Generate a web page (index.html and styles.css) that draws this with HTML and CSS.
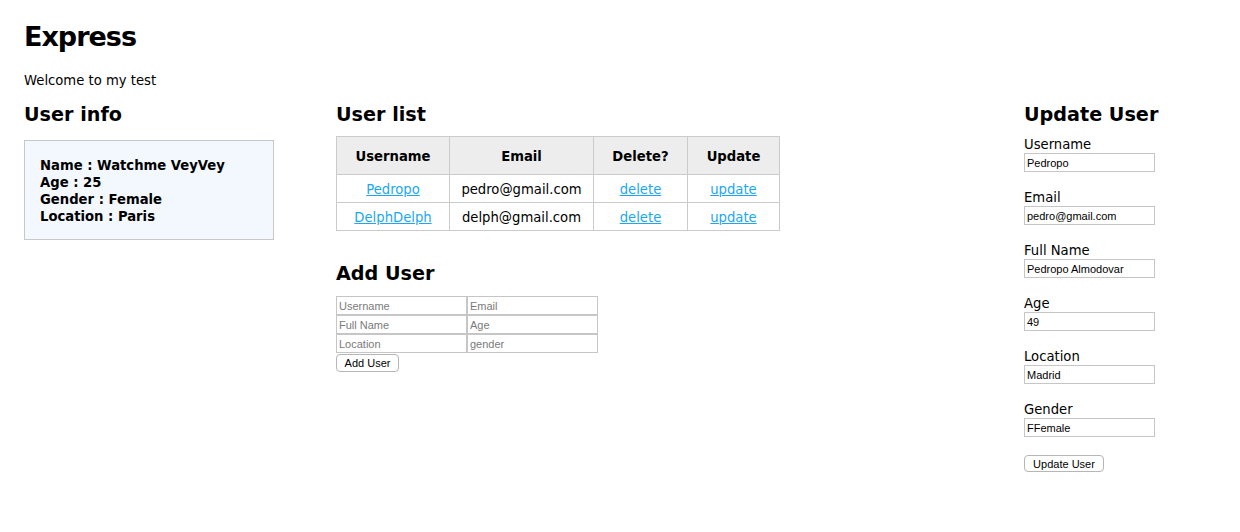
FILE: index.html
```html
<!DOCTYPE html>
<html>
<head>
<meta charset="utf-8">
<title>Express</title>
<link rel="stylesheet" href="styles.css">
</head>
<body>
<h1 class="title">Express</h1>
<p class="welcome">Welcome to my test</p>
<div class="columns">
  <section class="col col-info">
    <h2 class="heading">User info</h2>
    <div class="info-box">
      <div>Name : Watchme VeyVey</div>
      <div>Age : 25</div>
      <div>Gender : Female</div>
      <div>Location : Paris</div>
    </div>
  </section>
  <section class="col col-list">
    <h2 class="heading">User list</h2>
    <table class="users">
      <colgroup>
        <col class="c1"><col class="c2"><col class="c3"><col class="c4">
      </colgroup>
      <thead>
        <tr><th>Username</th><th>Email</th><th>Delete?</th><th>Update</th></tr>
      </thead>
      <tbody>
        <tr><td><a href="#">Pedropo</a></td><td>pedro@gmail.com</td><td><a href="#">delete</a></td><td><a href="#">update</a></td></tr>
        <tr><td><a href="#">DelphDelph</a></td><td>delph@gmail.com</td><td><a href="#">delete</a></td><td><a href="#">update</a></td></tr>
      </tbody>
    </table>
    <h2 class="heading add-heading">Add User</h2>
    <div class="add-grid">
      <input class="field" type="text" placeholder="Username">
      <input class="field" type="text" placeholder="Email">
      <input class="field" type="text" placeholder="Full Name">
      <input class="field" type="text" placeholder="Age">
      <input class="field" type="text" placeholder="Location">
      <input class="field" type="text" placeholder="gender">
    </div>
    <button class="btn btn-add" type="button">Add User</button>
  </section>
  <section class="col col-update">
    <h2 class="heading">Update User</h2>
    <div class="group"><label class="lbl">Username</label><input class="field" type="text" value="Pedropo"></div>
    <div class="group"><label class="lbl">Email</label><input class="field" type="text" value="pedro@gmail.com"></div>
    <div class="group"><label class="lbl">Full Name</label><input class="field" type="text" value="Pedropo Almodovar"></div>
    <div class="group"><label class="lbl">Age</label><input class="field" type="text" value="49"></div>
    <div class="group"><label class="lbl">Location</label><input class="field" type="text" value="Madrid"></div>
    <div class="group"><label class="lbl">Gender</label><input class="field" type="text" value="FFemale"></div>
    <button class="btn btn-update" type="button">Update User</button>
  </section>
</div>
</body>
</html>
```
FILE: styles.css
```css
html, body {
  margin: 0;
  background: #ffffff;
}
body {
  padding: 20px 24px 0 24px;
  font-family: "DejaVu Sans", "Lucida Grande", Verdana, sans-serif;
  font-size: 13.2px;
  line-height: 17px;
  color: #000;
}
.title {
  margin: 0;
  font-size: 27px;
  letter-spacing: -1px;
  line-height: 34px;
  font-weight: bold;
}
.welcome {
  margin: 18px 0 0 0;
}
.columns {
  display: flex;
  align-items: flex-start;
  margin-top: 14px;
}
.col-info { width: 312px; flex: none; }
.col-list { width: 688px; flex: none; }
.col-update { flex: 1; }
.heading {
  margin: 0;
  font-size: 19.2px;
  line-height: 24px;
  font-weight: bold;
}
.info-box {
  margin-top: 13px;
  width: 250px;
  box-sizing: border-box;
  border: 1px solid #c8c8c8;
  background: #f3f7fe;
  padding: 16px 15px 14px 15px;
  font-weight: bold;
}
.users {
  margin-top: 9px;
  border-collapse: collapse;
  table-layout: fixed;
  width: 443px;
}
.users col.c1 { width: 113px; }
.users col.c2 { width: 144px; }
.users col.c3 { width: 94px; }
.users col.c4 { width: 92px; }
.users th, .users td {
  border: 1px solid #cbcbcb;
  text-align: center;
  padding: 1px 0 0 0;
}
.users th {
  background: #ededed;
  height: 36px;
  font-weight: bold;
}
.users td {
  height: 26px;
}
.users a {
  color: #1aa7f3;
  text-decoration: underline;
}
.add-heading {
  margin-top: 31px;
}
.add-grid {
  margin-top: 10px;
  display: grid;
  grid-template-columns: 131px 131px;
  width: 262px;
}
.field {
  display: block;
  box-sizing: border-box;
  width: 131px;
  height: 19px;
  margin: 0;
  padding: 0 2px;
  border: 1px solid #c6c6c6;
  font-family: "Liberation Sans", Helvetica, Arial, sans-serif;
  font-size: 11px;
  color: #000;
  background: #fff;
  outline: none;
}
.field::placeholder {
  color: #7a7a7a;
}
.btn {
  display: block;
  box-sizing: border-box;
  height: 18px;
  padding: 0 7px;
  border: 1px solid #b6b6b6;
  border-radius: 4px;
  background: #fff;
  font-family: "Liberation Sans", Helvetica, Arial, sans-serif;
  font-size: 11px;
  color: #000;
  line-height: 16px;
}
.btn-add {
  margin-top: 1px;
  width: 63px;
}
.col-update .heading {
  margin-bottom: 10px;
}
.group {
  margin-bottom: 18px;
}
.lbl {
  display: block;
  line-height: 16px;
}
.btn-update {
  width: 80px;
  height: 17px;
}
```
